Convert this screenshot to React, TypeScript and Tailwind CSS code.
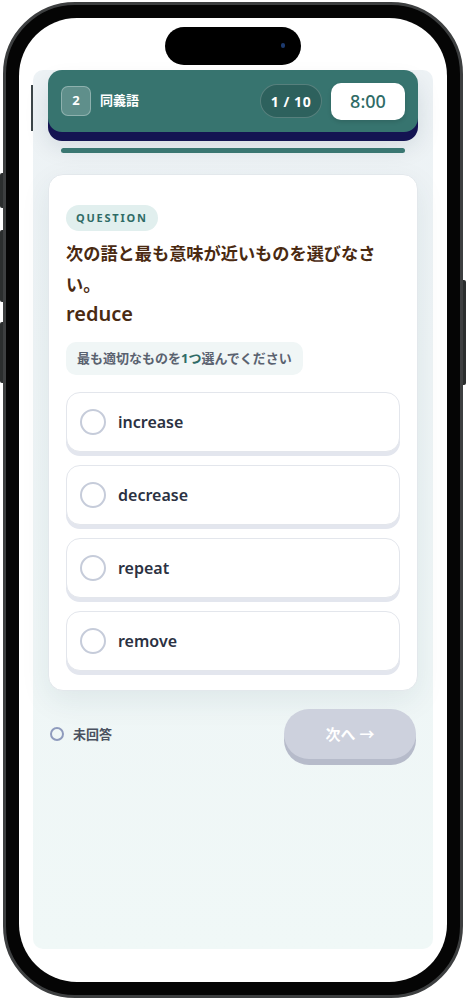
import React from 'react';

const font = { fontFamily: '"Noto Sans", "Noto Sans CJK JP", sans-serif' };

const options = ['increase', 'decrease', 'repeat', 'remove'];

export default function App() {
  return (
    <div className="relative w-[466px] h-[1000px] bg-white overflow-hidden" style={font}>
      {/* side buttons */}
      <div className="absolute left-0 top-[173px] w-[5px] h-[35px] rounded-l-[2px] bg-[#2b2e2e]" />
      <div className="absolute left-0 top-[230px] w-[5px] h-[72px] rounded-l-[2px] bg-[#2b2e2e]" />
      <div className="absolute left-0 top-[322px] w-[5px] h-[61px] rounded-l-[2px] bg-[#2b2e2e]" />
      <div className="absolute right-0 top-[280px] w-[5px] h-[105px] rounded-r-[2px] bg-[#2b2e2e]" />

      {/* phone frame */}
      <div className="absolute left-[3px] top-[2px] w-[460px] h-[996px] rounded-[72px] bg-[#050505] border-[3px] border-[#3d3f40] p-[13px]">
        <div className="relative w-full h-full rounded-[58px] bg-white overflow-hidden flex flex-col pt-[52px] px-[14px] pb-[33px]">
          {/* dynamic island */}
          <div className="absolute left-[146px] top-[9px] w-[136px] h-[38px] rounded-full bg-black">
            <div className="absolute right-[16px] top-[16px] w-[4px] h-[5px] rounded-full bg-[#1d3a6e]" />
          </div>

          {/* app panel */}
          <div className="relative flex-1 flex flex-col rounded-[10px] bg-gradient-to-b from-[#edf2f5] to-[#f0f8f7]">
            <div className="absolute -left-[2px] top-[15px] w-[2px] h-[46px] bg-[#3c4548]" />

            {/* header */}
            <div className="mx-[15px] h-[62px] rounded-[14px] bg-[#37746f] shadow-[0_9px_0_#141452,0_14px_24px_rgba(20,40,60,0.12)] flex items-center px-[13px]">
              <div className="w-[30px] h-[30px] rounded-[7px] bg-white/20 border border-white/30 flex items-center justify-center text-white text-[13px] font-bold">
                2
              </div>
              <div className="ml-[9px] text-white text-[13px] font-bold">同義語</div>
              <div className="ml-auto h-[34px] w-[62px] rounded-full bg-[#2d615d] border border-white/20 flex items-center justify-center text-white text-[14px] font-bold tracking-[0.04em]">
                1 / 10
              </div>
              <div className="ml-[9px] h-[37px] w-[74px] rounded-[10px] bg-white shadow-[0_2px_4px_rgba(0,0,0,0.12)] flex items-center justify-center text-[#2f6b66] text-[18px] font-medium">
                8:00
              </div>
            </div>

            {/* progress */}
            <div className="mx-[28px] mt-[16px] h-[5px] rounded-full bg-[#3a7772]" />

            {/* question card */}
            <div className="mx-[15px] mt-[21px] rounded-[15px] bg-white border border-[#e3e8ec] shadow-[0_10px_30px_rgba(30,60,80,0.08)] px-[17px] pt-[29px] pb-[19px]">
              <div className="inline-flex items-center h-[26px] px-[10px] rounded-full bg-[#e1efee] text-[#2f6b66] text-[11px] font-bold tracking-[0.16em]">
                QUESTION
              </div>
              <div className="mt-[7px] text-[17.2px] leading-[31px] font-bold text-[#4a2a12]">
                次の語と最も意味が近いものを選びなさい。
              </div>
              <div className="text-[20px] leading-[28px] font-semibold text-[#4a2a12]">reduce</div>
              <div className="mt-[14px] inline-flex items-center h-[33px] px-[11px] rounded-[10px] bg-[#f0f6f6] text-[13px] font-bold text-[#5a6270]">
                最も適切なものを<span className="text-[#2f6b66]">1つ</span>選んでください
              </div>

              <div className="mt-[17px] flex flex-col gap-[13px]">
                {options.map((o) => (
                  <div
                    key={o}
                    className="h-[60px] rounded-[14px] bg-white border border-[#e3e6ec] shadow-[0_4px_0_#e3e6ee] flex items-center px-[13px]"
                  >
                    <div className="w-[26px] h-[26px] rounded-full border-2 border-[#c6ccda]" />
                    <div className="ml-[12px] text-[16px] font-semibold text-[#2b3142]">{o}</div>
                  </div>
                ))}
              </div>
            </div>

            {/* footer row */}
            <div className="mt-[18px] mx-[17px] flex items-start justify-between">
              <div className="flex items-center h-[50px]">
                <div className="w-[14px] h-[14px] rounded-full border-[2.5px] border-[#8f9bbd]" />
                <div className="ml-[9px] text-[13px] font-bold text-[#4a5160]">未回答</div>
              </div>
              <div className="w-[132px] h-[50px] rounded-full bg-[#cdd1dd] shadow-[0_6px_0_#b6bbca] flex items-center justify-center text-white text-[15px] font-bold">
                次へ →
              </div>
            </div>
          </div>
        </div>
      </div>
    </div>
  );
}
